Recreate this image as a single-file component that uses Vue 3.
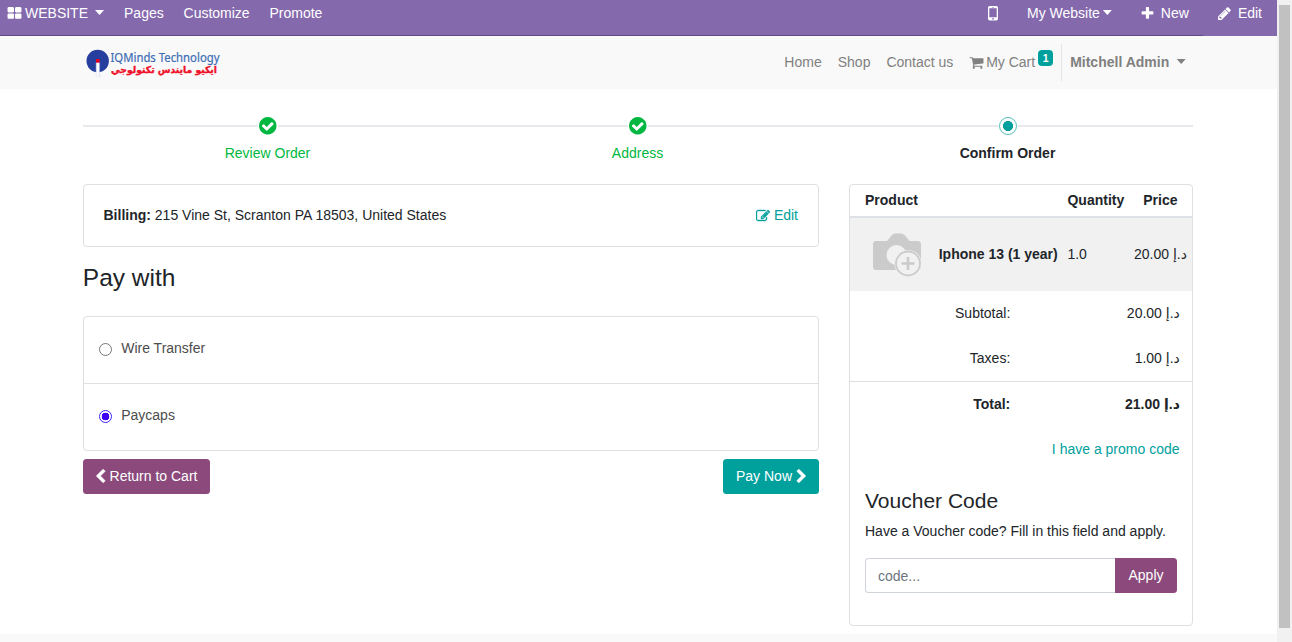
<script setup>
import { ref } from 'vue'

const icons = {
  grid: 'M832 1024v384q0 52-38 90t-90 38h-512q-52 0-90-38t-38-90v-384q0-52 38-90t90-38h512q52 0 90 38t38 90zm0-768v384q0 52-38 90t-90 38h-512q-52 0-90-38t-38-90v-384q0-52 38-90t90-38h512q52 0 90 38t38 90zm896 768v384q0 52-38 90t-90 38h-512q-52 0-90-38t-38-90v-384q0-52 38-90t90-38h512q52 0 90 38t38 90zm0-768v384q0 52-38 90t-90 38h-512q-52 0-90-38t-38-90v-384q0-52 38-90t90-38h512q52 0 90 38t38 90z',
  plus: 'M1600 736v192q0 40-28 68t-68 28h-416v416q0 40-28 68t-68 28h-192q-40 0-68-28t-28-68v-416h-416q-40 0-68-28t-28-68v-192q0-40 28-68t68-28h416v-416q0-40 28-68t68-28h192q40 0 68 28t28 68v416h416q40 0 68 28t28 68z',
  pencil: 'M491 1536l91-91-235-235-91 91v107h128v128h107zm523-928q0-22-22-22-10 0-17 7l-542 542q-7 7-7 17 0 22 22 22 10 0 17-7l542-542q7-7 7-17zm-54-192l416 416-832 832h-416v-416zm683 96q0 53-37 90l-166 166-416-416 166-165q36-38 90-38 53 0 91 38l235 234q37 39 37 91z',
  cart: 'M704 1536q0 52-38 90t-90 38-90-38-38-90 38-90 90-38 90 38 38 90zm896 0q0 52-38 90t-90 38-90-38-38-90 38-90 90-38 90 38 38 90zm128-1088v512q0 24-16.5 42.5t-40.5 21.5l-1044 122q13 60 13 70 0 16-24 64h920q26 0 45 19t19 45-19 45-45 19h-1024q-26 0-45-19t-19-45q0-11 8-31.5t16-36 21.5-40 15.5-29.5l-177-823h-204q-26 0-45-19t-19-45 19-45 45-19h256q16 0 28.5 6.5t19.5 15.5 13 24.5 8 26 5.5 29.5 4.5 26h1201q26 0 45 19t19 45z',
  left: 'M1427 301l-531 531 531 531q19 19 19 45t-19 45l-166 166q-19 19-45 19t-45-19l-742-742q-19-19-19-45t19-45l742-742q19-19 45-19t45 19l166 166q19 19 19 45t-19 45z',
  right: 'M1363 877l-742 742q-19 19-45 19t-45-19l-166-166q-19-19-19-45t19-45l531-531-531-531q-19-19-19-45t19-45l166-166q19-19 45-19t45 19l742 742q19 19 19 45t-19 45z',
  edit: 'M888 1184l116-116-152-152-116 116v56h96v96h56zm440-720q-16-16-33 1l-350 350q-17 17-1 33t33-1l350-350q17-17 1-33zm80 594v190q0 119-84.5 203.5t-203.5 84.5h-832q-119 0-203.5-84.5t-84.5-203.5v-832q0-119 84.5-203.5t203.5-84.5h832q63 0 117 25 15 7 18 23 3 17-9 29l-49 49q-14 14-32 8-23-6-45-6h-832q-66 0-113 47t-47 113v832q0 66 47 113t113 47h832q66 0 113-47t47-113v-126q0-13 9-22l64-64q15-15 35-7t20 29zm-96-738l288 288-672 672h-288v-288zm444 132l-92 92-288-288 92-92q28-28 68-28t68 28l152 152q28 28 28 68t-28 68z',
  check: 'M1412 734q0-28-18-46l-91-90q-19-19-45-19t-45 19l-408 407-226-226q-19-19-45-19t-45 19l-91 90q-18 18-18 46 0 27 18 45l362 362q19 19 45 19 27 0 46-19l543-543q18-18 18-45zm252 162q0 209-103 385.5t-279.5 279.5-385.5 103-385.5-103-279.5-279.5-103-385.5 103-385.5 279.5-279.5 385.5-103 385.5 103 279.5 279.5 103 385.5z',
}

const steps = [
  { label: 'Review Order', done: true },
  { label: 'Address', done: true },
  { label: 'Confirm Order', done: false },
]
const methods = ['Wire Transfer', 'Paycaps']
const selected = ref('Paycaps')
const totals = [
  { label: 'Subtotal:', value: '20.00 د.إ', cls: '' },
  { label: 'Taxes:', value: '1.00 د.إ', cls: '' },
  { label: 'Total:', value: '21.00 د.إ', cls: 'grand' },
]
</script>

<template>
  <div class="window">
    <div class="page">
      <nav class="topbar">
        <a class="brand"><svg class="ic" viewBox="0 0 1792 1792"><path :d="icons.grid" /></svg><span>WEBSITE</span><i class="caret"></i></a>
        <a class="pages">Pages</a>
        <a class="customize">Customize</a>
        <a class="promote">Promote</a>
        <div class="tools">
          <svg class="phone" width="10" height="15" viewBox="0 0 10 15">
            <path fill-rule="evenodd" d="M1.700 0h6.600Q10 0 10 1.700v11.100q0 1.700-1.700 1.700H1.700Q0 14.500 0 12.800V1.700Q0 0 1.700 0zM1.300 2.300v8.900h7.400V2.300zM5 12a.8.8 0 1 0 .01 0zM4 .9v.5h2V.9z" />
          </svg>
          <a class="site"><span>My Website</span><i class="caret"></i></a>
          <a class="new"><svg class="ic" viewBox="0 0 1792 1792"><path :d="icons.plus" /></svg>New</a>
          <a class="edit-page"><svg class="ic" viewBox="0 0 1792 1792"><path :d="icons.pencil" /></svg>Edit</a>
        </div>
      </nav>

      <header class="header">
        <svg class="logo" width="138" height="36" viewBox="0 0 138 36">
          <circle cx="12.700" cy="15" r="11.200" fill="#263f9f" />
          <path d="M11.200 16.500h3.200v12l1.600 1.600h-3.400l-1.400-1.600z" fill="#fdfdff" stroke="#c5d3ea" stroke-width=".5" />
          <rect x="11" y="13" width="3.600" height="3.600" fill="#e8001c" />
          <text x="25.500" y="15.500" class="logo-en" textLength="109" lengthAdjust="spacingAndGlyphs">IQMinds Technology</text>
          <text x="26" y="26.500" class="logo-ar" textLength="106" lengthAdjust="spacingAndGlyphs">ايكيو مايندس تكنولوجي</text>
        </svg>
        <div class="menu">
          <a>Home</a>
          <a>Shop</a>
          <a>Contact us</a>
          <a class="cart"><svg class="ic" viewBox="0 0 1792 1792"><path :d="icons.cart" /></svg><span>My Cart</span><sup>1</sup></a>
          <a class="user"><span>Mitchell Admin</span><i class="caret"></i></a>
        </div>
      </header>

      <main class="container">
        <div class="steps">
          <div v-for="s in steps" :key="s.label" class="step" :class="{ done: s.done }">
            <div class="marker">
              <svg v-if="s.done" class="tick" viewBox="128 128 1536 1536"><path :d="icons.check" /></svg>
              <i v-else class="dot"></i>
            </div>
            <span>{{ s.label }}</span>
          </div>
        </div>

        <div class="columns">
          <section class="left">
            <div class="card billing">
              <p><b>Billing:</b> 215 Vine St, Scranton PA 18503, United States</p>
              <a><svg class="ic" viewBox="0 0 1792 1792"><path :d="icons.edit" /></svg>Edit</a>
            </div>
            <h3>Pay with</h3>
            <div class="card methods">
              <label v-for="m in methods" :key="m">
                <input v-model="selected" type="radio" name="method" :value="m" />
                <i class="radio" :class="{ on: selected === m }"></i>{{ m }}
              </label>
            </div>
            <div class="actions">
              <button class="btn plum back"><svg class="ic" viewBox="0 0 1792 1792"><path :d="icons.left" /></svg>Return to Cart</button>
              <button class="btn teal pay">Pay Now<svg class="ic" viewBox="0 0 1792 1792"><path :d="icons.right" /></svg></button>
            </div>
          </section>

          <aside class="card summary">
            <div class="row head"><span>Product</span><span>Quantity</span><span>Price</span></div>
            <div class="row item">
              <svg class="photo" width="50" height="44" viewBox="0 0 50 44">
                <path d="M4 8h11l5-6q1.500-1.500 3-1.500h6q2 0 3.500 1.500l5 6h8q3.500 0 3.500 3.500v22q0 3.500-3.500 3.500H4q-3 0-3-3.500v-22Q1 8 4 8z" fill="#cbcbcb" />
                <circle cx="24.500" cy="22" r="10" fill="#f1f1f1" />
                <circle cx="36" cy="30.500" r="13.500" fill="#f1f1f1" />
                <circle cx="36" cy="30.500" r="12" fill="#f1f1f1" stroke="#cbcbcb" stroke-width="1.800" />
                <path d="M36 24v13M29.500 30.500h13" stroke="#cbcbcb" stroke-width="2.600" />
              </svg>
              <b>Iphone 13 (1 year)</b><span class="qty">1.0</span><span class="price">20.00 د.إ</span>
            </div>
            <div v-for="t in totals" :key="t.label" class="row total" :class="t.cls">
              <span>{{ t.label }}</span><span>{{ t.value }}</span>
            </div>
            <a class="promo">I have a promo code</a>
            <h4>Voucher Code</h4>
            <p class="hint">Have a Voucher code? Fill in this field and apply.</p>
            <div class="voucher">
              <input type="text" placeholder="code..." />
              <button class="btn plum">Apply</button>
            </div>
          </aside>
        </div>
      </main>
      <footer></footer>
    </div>
    <div class="scrollbar"><i></i></div>
  </div>
</template>

<style>
html, body { margin: 0; overflow: hidden; }
</style>

<style scoped>
* { box-sizing: border-box; }
.window { display: flex; width: 1292px; height: 642px; overflow: hidden; background: #fff; color: #212529; font: 14px/21px "Liberation Sans", Arial, "DejaVu Sans", sans-serif; }
.page { display: flex; flex-direction: column; width: 1277px; }
.ic { width: 15px; height: 15px; margin: 0 -.5px; fill: currentColor; flex: none; }
.caret { width: 9px; height: 5px; margin-top: -2px; background: currentColor; clip-path: polygon(0 0, 100% 0, 50% 100%); flex: none; }
p, h3, h4 { margin: 0; }
a { white-space: nowrap; }

.topbar { display: flex; align-items: flex-start; height: 36px; padding: 3px 15px 0 7.500px; background: linear-gradient(#5f4a86, #5f4a86) 0 35px / 1203px 1px no-repeat #8569ad; color: #fff; }
.topbar a { display: flex; align-items: center; height: 21px; }
.brand .ic { margin-right: -.5px; }
.brand span { margin: 0 7px 0 3.500px; }
.pages { margin-left: 20px; }
.customize, .promote { margin-left: 19.800px; }
.tools { display: flex; margin-left: auto; }
.phone { margin: 3px 29px 0 0; fill: #fff; }
.site .caret { margin-left: 3px; }
.new { margin-left: 28.500px; }
.new .ic { margin-right: 6px; }
.edit-page { margin-left: 28.500px; }
.edit-page .ic { margin-right: 6px; }

.header { display: flex; height: 53px; flex: none; padding: 0 84px 0 85px; background: #f9f9f9; color: #808080; }
.logo { margin-top: 10px; overflow: visible; }
.logo-en { font: 12px/1 "Noto Sans", "Open Sans", sans-serif; fill: #3d6db5; stroke: #3d6db5; stroke-width: .2px; }
.logo-ar { font: bold 9.500px/1 "DejaVu Sans", sans-serif; fill: #f01028; stroke: #f01028; stroke-width: .35px; }
.menu { display: flex; align-items: center; margin-left: auto; gap: 16px; }
.cart { display: flex; align-items: center; }
.cart span { margin: 0 3px 0 2.800px; }
.cart sup { width: 15px; height: 16px; margin-top: -9px; border-radius: 4px; background: #00a09d; color: #fff; font: bold 10.500px/16px "Liberation Sans", sans-serif; text-align: center; }
.user { display: flex; align-items: center; height: 37px; margin-left: -8px; padding: 0 7.300px 0 8px; border-left: 1px solid #e5e5e5; font-weight: bold; }
.user .caret { margin-left: 7.500px; }

.container { width: 1110px; height: 545px; margin: 0 auto 0 83px; padding-top: 28px; }
.steps { display: flex; height: 67px; background: linear-gradient(#e7e9ed, #e7e9ed) 0 8px / 100% 2px no-repeat; }
.step { flex: 1; display: flex; flex-direction: column; align-items: center; gap: 8px; font-weight: bold; }
.step span { margin-right: 1px; }
.step.done { color: #00b841; font-weight: normal; }
.marker { display: flex; align-items: center; justify-content: center; height: 18px; width: 18px; border-radius: 50%; background: #fff; box-shadow: 0 0 0 1px #fff; }
.tick { width: 17.500px; height: 17.500px; fill: #00b841; }
.dot { width: 18px; height: 18px; border: 1px solid #55c1bf; border-radius: 50%; background: radial-gradient(circle, #00a09d 0 4.800px, #fff 5.300px); }

.columns { display: flex; justify-content: space-between; align-items: flex-start; }
.card { border: 1px solid #dedfe1; border-radius: 4px; }
.left { width: 736px; }
.billing { display: flex; justify-content: space-between; height: 63px; padding: 20px 20px 0 19.500px; }
.billing a { display: flex; align-items: center; height: 21px; color: #00a09d; }
.billing .ic { width: 14px; height: 14px; margin: 0 4px 0 0; stroke: currentColor; stroke-width: 50; }
h3 { margin: 16px 0 0 -.2px; font-size: 24.500px; font-weight: 400; line-height: 30px; }
.methods { height: 135px; margin-top: 23px; color: #4c4c4c; }
.methods label { display: flex; align-items: center; height: 66px; padding: 0 15px 3px; }
.methods label + label { height: 67px; border-top: 1px solid #dedfe1; }
.methods input { display: none; }
.radio { width: 13px; height: 13px; margin: 1px 9.200px 0 0; border: 1px solid #767676; border-radius: 50%; }
.radio.on { border-color: #3b24f5; background: radial-gradient(circle, #3d00f5 0 3.600px, #fff 4.100px); }
.actions { display: flex; justify-content: space-between; margin-top: 8px; }
.btn { display: flex; align-items: center; justify-content: center; height: 35px; padding: 0; border: 0; border-radius: 3.500px; color: #fff; font: inherit; }
.btn .ic { stroke: currentColor; stroke-width: 60; }
.plum { background: #8b4a7b; }
.teal { background: #00a09d; }
.back { width: 127px; }
.back .ic { margin: 0 1.500px 0 -2.500px; }
.pay { width: 96px; padding-left: 1px; }
.pay .ic { margin-left: 1.500px; margin-right: -1.500px; }

.summary { width: 344px; height: 442px; }
.row { display: flex; align-items: center; }
.head { height: 33px; padding: 0 14.500px 1px 15px; border-bottom: 2px solid #dee2e6; font-weight: bold; }
.head span:nth-child(2) { margin-left: auto; }
.head span:nth-child(3) { margin-left: 19px; }
.item { height: 73px; padding: 0 5px 0 22px; background: #f1f1f1; }
.photo { margin-right: 16.700px; margin-top: 1px; }
.qty { margin-left: 9.700px; }
.price { margin-left: auto; }
.item b, .item span { white-space: nowrap; }
.total { height: 45px; padding-right: 12.200px; }
.total span:first-child { width: 160.300px; text-align: right; }
.total span:last-child { margin-left: auto; }
.grand { border-top: 1px solid #dedfe1; font-weight: bold; }
.promo { display: block; padding: 13px 12.500px 0; text-align: right; color: #00a09d; }
h4 { margin: 28px 15px 0; font-size: 21px; font-weight: 400; line-height: 25px; }
.hint { margin: 8px 15px 0; white-space: nowrap; }
.voucher { display: flex; margin: 16px 15px 0; }
.voucher input { width: 250px; height: 35px; padding: 0 12px; border: 1px solid #ced4da; border-right: 0; border-radius: 3.500px 0 0 3.500px; background: #fff; font: inherit; outline: 0; }
.voucher input::placeholder { color: #6c757d; }
.voucher .btn { width: 62px; border-radius: 0 3.500px 3.500px 0; }

footer { height: 8px; background: #f9f9f9; }
.scrollbar { width: 15px; background: #f1f1f1; padding: 5px 2px 0; }
.scrollbar i { display: block; height: 623px; background: #c1c1c1; width: 11px; }
</style>
